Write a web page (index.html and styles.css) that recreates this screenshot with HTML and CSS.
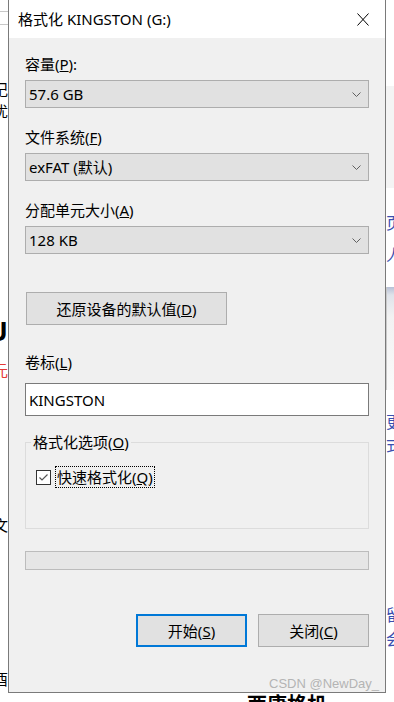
FILE: index.html
```html
<!DOCTYPE html>
<html lang="zh-CN">
  <head>
    <meta charset="UTF-8" />
    <title>格式化 KINGSTON (G:)</title>
    <link rel="stylesheet" href="styles.css">
  </head>
  <body>
    <!-- Page behind the dialog -->
    <div class="page">
      <div class="side side-left">
        <div class="search-edge"></div>
        <p class="frag frag-ji">记</p>
        <p class="frag frag-you">优</p>
        <p class="frag frag-u">U</p>
        <p class="frag frag-red">元</p>
        <p class="frag frag-wen">文</p>
        <p class="frag frag-you2">酉</p>
      </div>

      <div class="middle">
        <h2 class="next-title">西康格机 <span class="next-arrow">›</span></h2>
      </div>

      <div class="side side-right">
        <div class="texture"></div>
        <p class="link link-ye">页</p>
        <p class="link link-ren">人</p>
        <div class="thumb"></div>
        <p class="link link-geng">更</p>
        <p class="link link-shi">式</p>
        <p class="link link-liu">留</p>
        <p class="link link-hui">会</p>
      </div>
    </div>

    <!-- Format dialog -->
    <div class="dialog">
      <div class="titlebar">
        <span class="title">格式化 KINGSTON (G:)</span>
        <svg class="close-icon" width="12" height="13" viewBox="0 0 12 13">
          <path d="M0.5 0.5 L11.5 12.5 M11.5 0.5 L0.5 12.5" stroke="#000" stroke-width="1" fill="none" />
        </svg>
      </div>

      <div class="dialog-body">
        <label class="field-label first">容量(<u>P</u>):</label>
        <div class="select">
          <span>57.6 GB</span>
          <svg class="chevron" width="9" height="5" viewBox="0 0 9 5"><path d="M0.5 0.5 L4.5 4.5 L8.5 0.5" stroke="#606060" fill="none" /></svg>
        </div>

        <label class="field-label">文件系统(<u>F</u>)</label>
        <div class="select">
          <span>exFAT (默认)</span>
          <svg class="chevron" width="9" height="5" viewBox="0 0 9 5"><path d="M0.5 0.5 L4.5 4.5 L8.5 0.5" stroke="#606060" fill="none" /></svg>
        </div>

        <label class="field-label">分配单元大小(<u>A</u>)</label>
        <div class="select">
          <span>128 KB</span>
          <svg class="chevron" width="9" height="5" viewBox="0 0 9 5"><path d="M0.5 0.5 L4.5 4.5 L8.5 0.5" stroke="#606060" fill="none" /></svg>
        </div>

        <button class="win-btn restore-btn">还原设备的默认值(<u>D</u>)</button>

        <label class="field-label label-volume">卷标(<u>L</u>)</label>
        <div class="textbox">KINGSTON</div>

        <fieldset class="options">
          <legend>格式化选项(<u>O</u>)</legend>
          <div class="check-row">
            <svg class="checkbox" width="15" height="15" viewBox="0 0 15 15">
              <rect x="0.5" y="0.5" width="14" height="14" fill="#fff" stroke="#333" />
              <path d="M3.5 7.5 L6 10 L11.5 4.5" stroke="#555" stroke-width="1.2" fill="none" />
            </svg>
            <span class="check-label">快速格式化(<u>Q</u>)</span>
          </div>
        </fieldset>

        <div class="progress"></div>

        <div class="actions">
          <button class="win-btn action-btn primary">开始(<u>S</u>)</button>
          <button class="win-btn action-btn">关闭(<u>C</u>)</button>
        </div>
      </div>
    </div>

    <div class="watermark">CSDN @NewDay_</div>
  </body>
</html>
```

FILE: styles.css
```css
/* Base */
* {
  margin: 0;
  padding: 0;
  box-sizing: border-box;
}

body {
  width: 394px;
  height: 702px;
  overflow: hidden;
  background: #ffffff;
  font-family: "Noto Sans", "Noto Sans CJK SC", sans-serif;
  color: #000;
  position: relative;
}

/* Page behind the dialog */
.page {
  display: grid;
  grid-template-columns: 8px 1fr 8px;
  height: 702px;
}

.side {
  display: flex;
  flex-direction: column;
  min-width: 0;
}

.side-left {
  align-items: flex-end;
}

.side-right {
  align-items: flex-start;
}

.search-edge {
  margin-top: 11px;
  width: 8px;
  height: 14px;
  border-top: 1px solid #c8c8c8;
  border-bottom: 1px solid #c8c8c8;
}

.frag {
  font-size: 15px;
  line-height: 16px;
  white-space: nowrap;
}

.frag-ji { margin-top: 56px; }
.frag-you { margin-top: 6px; }
.frag-u {
  margin-top: 198px;
  font-size: 27px;
  line-height: 28px;
  font-weight: 700;
}
.frag-red {
  margin-top: 17px;
  color: #e53935;
}
.frag-wen { margin-top: 139px; }
.frag-you2 { margin-top: 138px; }

.middle {
  padding-left: 239px;
}

.next-title {
  margin-top: 692px;
  font-size: 20px;
  line-height: 26px;
  font-weight: 700;
  white-space: nowrap;
}

.next-arrow {
  font-weight: 400;
  color: #999;
  margin-left: 10px;
}

.texture {
  margin-top: 86px;
  width: 8px;
  height: 102px;
  background: #f4f4f4;
}

.link {
  font-size: 16px;
  line-height: 18px;
  color: #3a4fb0;
  white-space: nowrap;
}

.link-ye { margin-top: 26px; }
.link-ren { margin-top: 14px; }
.link-geng { margin-top: 23px; }
.link-shi { margin-top: 5px; }
.link-liu { margin-top: 152px; }
.link-hui { margin-top: 6px; }

.thumb {
  margin-top: 23px;
  width: 8px;
  height: 103px;
  border-left: 1px solid #c9c9c9;
  background: linear-gradient(#b7c0d6 0, #dfe3ea 8px, #f2f2f2 30px, #fafafa 100%);
}

/* Dialog */
.dialog {
  position: absolute;
  top: 0;
  left: 8px;
  width: 378px;
  height: 693px;
  background: #f0f0f0;
  border: 1px solid #7a7a7a;
  border-top: none;
  font-size: 15px;
  display: flex;
  flex-direction: column;
}

.titlebar {
  height: 38px;
  background: #ffffff;
  display: flex;
  align-items: center;
  justify-content: space-between;
  padding: 0 16px 0 9px;
  flex-shrink: 0;
}

.title {
  line-height: 20px;
}

.close-icon {
  margin-top: 1px;
}

.dialog-body {
  padding: 0 16px;
  display: flex;
  flex-direction: column;
}

.field-label {
  display: block;
  line-height: 20px;
  margin-top: 19px;
}

.field-label.first {
  margin-top: 16px;
}

.select {
  margin-top: 6px;
  height: 28px;
  background: #e1e1e1;
  border: 1px solid #adadad;
  display: flex;
  align-items: center;
  justify-content: space-between;
  padding: 0 7px 0 3px;
  line-height: 20px;
}

.win-btn {
  font-family: inherit;
  font-size: 15px;
  color: #000;
  background: #e1e1e1;
  border: 1px solid #adadad;
  height: 33px;
  line-height: 20px;
}

.restore-btn {
  margin-top: 38px;
  width: 201px;
  margin-left: 1px;
}

.field-label.label-volume {
  margin-top: 27px;
}

.textbox {
  margin-top: 11px;
  height: 33px;
  background: #ffffff;
  border: 1px solid #7a7a7a;
  padding: 0 3px;
  display: flex;
  align-items: center;
  line-height: 20px;
}

/* Format options group */
.options {
  margin-top: 16px;
  border: 1px solid #dcdcdc;
  padding: 0 10px 40px;
}

.options legend {
  margin-left: -5px;
  padding: 0 2px;
  line-height: 20px;
}

.check-row {
  margin-top: 14px;
  display: flex;
  align-items: center;
  height: 22px;
}

.checkbox {
  flex-shrink: 0;
}

.check-label {
  margin-left: 4px;
  border: 1px dotted #000;
  padding: 0 1px;
  line-height: 20px;
}

.progress {
  margin-top: 22px;
  height: 19px;
  background: #e6e6e6;
  border: 1px solid #bcbcbc;
}

.actions {
  margin-top: 44px;
  display: flex;
  justify-content: flex-end;
  gap: 11px;
}

.action-btn {
  width: 111px;
}

.action-btn.primary {
  border: 2px solid #0078d7;
}

.watermark {
  position: absolute;
  right: 15px;
  top: 676px;
  font-family: "Liberation Sans", sans-serif;
  font-size: 13px;
  line-height: 16px;
  color: #b4b4b4;
}
```
